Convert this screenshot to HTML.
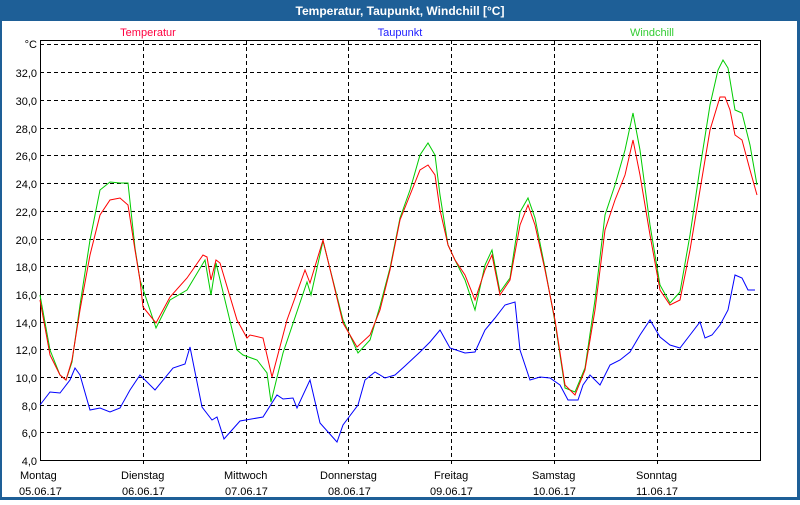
<!DOCTYPE html>
<html><head><meta charset="utf-8"><style>
body{margin:0;width:800px;height:500px;overflow:hidden;background:#fff;font-family:"Liberation Sans",sans-serif}
</style></head><body>
<svg width="800" height="500" xmlns="http://www.w3.org/2000/svg" font-family="Liberation Sans, sans-serif" font-size="11">
<rect x="0" y="0" width="800" height="500" fill="#1e5f97"/>
<rect x="2" y="21" width="795" height="476" fill="#fff"/>
<text x="400" y="15" fill="#fff" font-weight="bold" font-size="12" text-anchor="middle">Temperatur, Taupunkt, Windchill [°C]</text>
<text x="148" y="36" fill="#ff0040" text-anchor="middle">Temperatur</text>
<text x="400" y="36" fill="#2020ff" text-anchor="middle">Taupunkt</text>
<text x="652" y="36" fill="#33cc33" text-anchor="middle">Windchill</text>
<g stroke="#000" stroke-dasharray="4,3" stroke-width="1">
<path d="M40 44.5H760M40 72.5H760M40 100.5H760M40 128.5H760M40 155.5H760M40 183.5H760M40 211.5H760M40 239.5H760M40 266.5H760M40 294.5H760M40 322.5H760M40 349.5H760M40 377.5H760M40 405.5H760M40 432.5H760"/>
<path d="M143.5 40V465M246.5 40V465M348.5 40V465M451.5 40V465M554.5 40V465M657.5 40V465"/>
</g>
<rect x="40.5" y="40.5" width="720" height="420" fill="none" stroke="#000"/>
<g text-anchor="end" fill="#000">
<text x="37" y="48">°C</text><text x="37" y="77">32,0</text><text x="37" y="105">30,0</text><text x="37" y="133">28,0</text><text x="37" y="160">26,0</text><text x="37" y="188">24,0</text><text x="37" y="216">22,0</text><text x="37" y="244">20,0</text><text x="37" y="271">18,0</text><text x="37" y="299">16,0</text><text x="37" y="327">14,0</text><text x="37" y="354">12,0</text><text x="37" y="382">10,0</text><text x="37" y="410">8,0</text><text x="37" y="437">6,0</text><text x="37" y="465">4,0</text>
</g>
<g fill="#000">
<text x="20" y="479">Montag</text><text x="19" y="495">05.06.17</text>
<text x="121" y="479">Dienstag</text><text x="122" y="495">06.06.17</text>
<text x="224" y="479">Mittwoch</text><text x="225" y="495">07.06.17</text>
<text x="320" y="479">Donnerstag</text><text x="328" y="495">08.06.17</text>
<text x="434" y="479">Freitag</text><text x="430" y="495">09.06.17</text>
<text x="532" y="479">Samstag</text><text x="533" y="495">10.06.17</text>
<text x="636" y="479">Sonntag</text><text x="636" y="495">11.06.17</text>
</g>
<polyline fill="none" stroke="#00cc00" points="40,295 50,350 60,375 66,380 72,362 80,305 90,240 100,190 110,182 120,183 128,183 135,248 140,280 156,328 170,300 187,290 205,260 211,295 216,263 237,350 243,355 257,360 267,373 271,402 283,353 307,282 311,295 323,241 343,320 358,353 370,340 380,306 390,268 400,218 410,190 420,155 428,143 435,155 440,195 448,245 455,260 465,280 475,310 485,265 492,250 500,292 510,278 520,212 528,198 535,218 545,268 555,322 565,388 575,392 585,368 595,300 605,215 615,185 625,150 633,113 640,150 650,225 660,285 670,303 680,292 690,235 700,168 710,105 718,70 723,60 728,68 735,110 742,113 750,145 757,185"/>
<polyline fill="none" stroke="#ff0000" points="40,300 50,355 60,375 66,380 72,360 80,310 90,255 100,215 110,200 120,198 128,205 135,250 140,280 143,307 156,323 170,297 187,278 203,255 207,257 211,280 216,260 220,263 237,320 247,338 250,335 263,338 272,377 287,320 305,270 310,283 323,240 343,323 357,347 370,335 380,310 390,270 400,220 410,195 420,170 428,165 435,175 440,210 448,245 455,260 465,275 475,300 485,270 492,255 500,295 510,280 520,225 528,205 535,225 545,270 555,320 565,385 575,395 585,370 595,310 605,230 615,200 625,175 633,140 640,175 650,235 660,290 670,305 680,300 690,250 700,190 710,130 720,97 725,97 730,110 735,135 742,140 750,170 757,195"/>
<polyline fill="none" stroke="#0000ff" points="40,405 50,392 60,393 70,380 75,368 80,375 90,410 100,408 110,412 120,408 130,390 140,375 155,390 173,368 185,364 190,347 202,407 212,420 217,417 224,439 240,421 263,417 277,395 283,399 293,398 297,408 310,380 320,423 337,442 343,425 358,405 365,380 375,372 385,378 395,375 405,366 420,352 430,342 440,330 450,348 465,353 475,352 485,330 495,318 505,305 515,302 520,350 530,380 540,377 550,378 560,385 568,400 578,400 583,385 590,375 600,385 610,365 620,360 630,352 640,335 650,320 660,337 670,345 680,348 690,335 700,322 705,338 712,335 720,325 728,310 735,275 742,278 748,290 755,290"/>
</svg>
</body></html>
